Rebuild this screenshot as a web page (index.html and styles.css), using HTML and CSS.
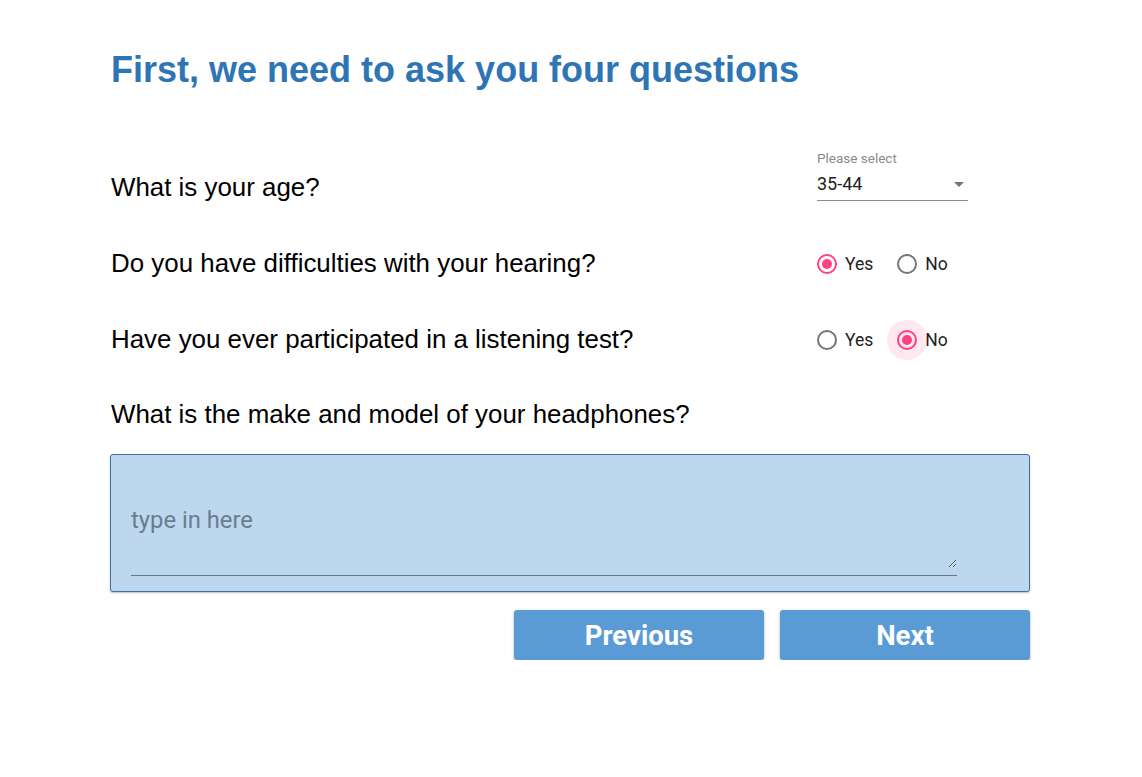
FILE: index.html
```html
<!DOCTYPE html>
<html>
<head>
<meta charset="utf-8">
<link rel="stylesheet" href="styles.css">
</head>
<body>
<div class="page">
  <h1 class="title">First, we need to ask you four questions</h1>

  <div class="row">
    <div class="question">What is your age?</div>
    <div class="answer select-wrap">
      <div class="select-label">Please select</div>
      <div class="select-value"><span>35-44</span><span class="caret"></span></div>
    </div>
  </div>

  <div class="row">
    <div class="question">Do you have difficulties with your hearing?</div>
    <div class="answer radios">
      <label class="radio checked"><span class="circle"></span><span class="rlabel">Yes</span></label>
      <label class="radio"><span class="circle"></span><span class="rlabel">No</span></label>
    </div>
  </div>

  <div class="row">
    <div class="question">Have you ever participated in a listening test?</div>
    <div class="answer radios">
      <label class="radio"><span class="circle"></span><span class="rlabel">Yes</span></label>
      <label class="radio checked focused"><span class="circle"></span><span class="rlabel">No</span></label>
    </div>
  </div>

  <div class="row last">
    <div class="question">What is the make and model of your headphones?</div>
  </div>

  <div class="text-box">
    <div class="field-wrap">
      <textarea class="field" placeholder="type in here"></textarea>
    </div>
  </div>

  <div class="buttons">
    <button class="btn">Previous</button>
    <button class="btn">Next</button>
  </div>
</div>
</body>
</html>
```

FILE: styles.css
```css
html, body {
  margin: 0;
  padding: 0;
  background: #ffffff;
}

.page {
  width: 920px;
  margin-left: 110px;
  padding-top: 48px;
  font-family: "Liberation Sans", Arial, sans-serif;
}

.title {
  margin: 0 0 57px 1px;
  font-size: 36px;
  line-height: 44px;
  font-weight: bold;
  color: #2e75b6;
}

.row {
  height: 76px;
  display: flex;
  align-items: center;
}

.question {
  flex: 1;
  font-size: 25.9px;
  color: #000;
  padding-left: 1px;
}

.answer {
  width: 213px;
  font-family: Roboto, "Liberation Sans", sans-serif;
}

.select-wrap {
  margin-bottom: 23px;
}

.select-label {
  font-size: 13.5px;
  line-height: 16px;
  color: #8a8a8a;
  margin-bottom: 7px;
}

.select-value {
  width: 151px;
  display: flex;
  justify-content: space-between;
  align-items: center;
  font-size: 18px;
  line-height: 22px;
  padding-bottom: 5px;
  border-bottom: 1px solid #8d8d8d;
  color: #222;
}

.caret {
  width: 0;
  height: 0;
  border-left: 5px solid transparent;
  border-right: 5px solid transparent;
  border-top: 5px solid #757575;
  margin-right: 4px;
}

.radios {
  display: flex;
  align-items: center;
  gap: 24px;
  margin-top: 2px;
}

.radio {
  display: flex;
  align-items: center;
  gap: 8px;
  font-size: 17.5px;
  color: #222;
  position: relative;
}

.circle {
  width: 20px;
  height: 20px;
  box-sizing: border-box;
  border: 2px solid #757575;
  border-radius: 50%;
  position: relative;
  display: block;
}

.radio.checked .circle {
  border-color: #ff4081;
}

.radio.checked .circle::after {
  content: "";
  position: absolute;
  left: 3px;
  top: 3px;
  width: 10px;
  height: 10px;
  border-radius: 50%;
  background: #ff4081;
}

.radio.focused .circle::before {
  content: "";
  position: absolute;
  left: -12px;
  top: -12px;
  width: 40px;
  height: 40px;
  border-radius: 50%;
  background: rgba(255, 64, 129, 0.12);
}

.row.last {
  height: 76px;
  margin-top: -1px;
}

.text-box {
  margin-top: 2px;
  box-sizing: border-box;
  height: 138px;
  background: #bdd7ee;
  border: 1px solid #41719c;
  border-radius: 3px;
  box-shadow: 0 1px 2px rgba(0, 0, 0, 0.25);
  padding: 43px 0 0 20px;
}

.field-wrap {
  width: 826px;
  padding-bottom: 7px;
  border-bottom: 1px solid #5d7790;
}

.field {
  display: block;
  box-sizing: border-box;
  width: 826px;
  height: 70px;
  margin: 0;
  padding: 8px 0 0 0;
  background: transparent;
  border: none;
  outline: none;
  font-family: Roboto, "Liberation Sans", sans-serif;
  font-size: 23.8px;
  line-height: 28px;
  color: #333;
}

.field::placeholder {
  color: #6b7c8d;
}

.buttons {
  margin-top: 18px;
  display: flex;
  justify-content: flex-end;
  gap: 16px;
}

.btn {
  width: 250px;
  height: 50px;
  border: none;
  border-radius: 3px;
  background: #5b9bd5;
  color: #ffffff;
  font-family: Roboto, "Liberation Sans", sans-serif;
  font-weight: bold;
  font-size: 27.5px;
  line-height: 48px;
  padding: 2px 0 0 0;
  box-sizing: border-box;
  box-shadow: 0 1px 3px rgba(0, 0, 0, 0.3);
}
```
